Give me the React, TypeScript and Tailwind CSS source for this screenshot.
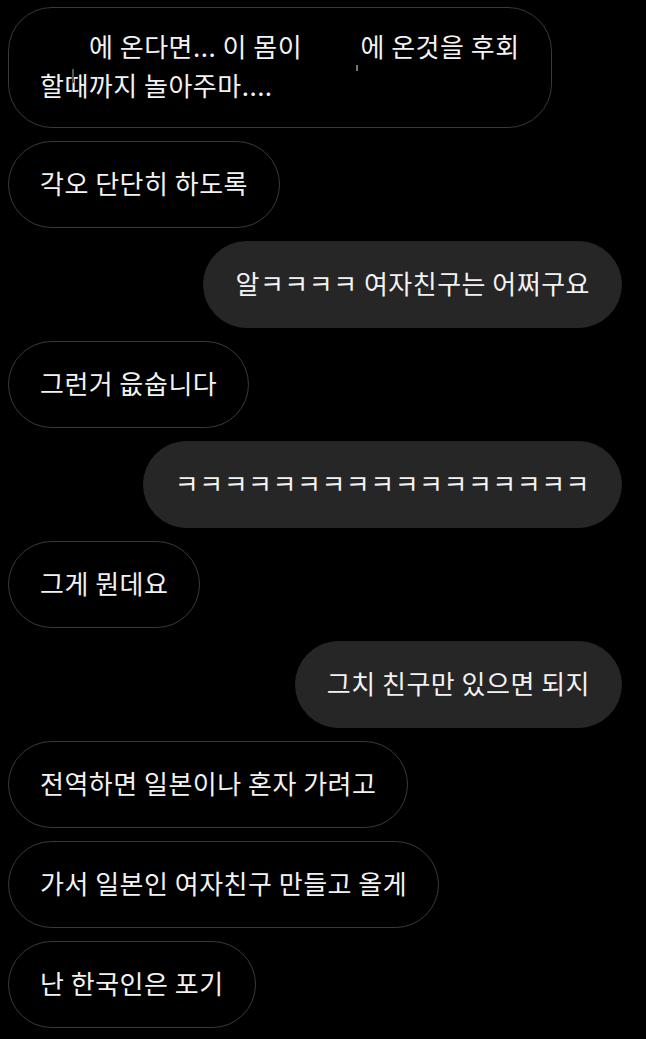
const ks = 'ㅋ'.repeat(17);

type Msg = { side: 'l' | 'r'; text: React.ReactNode };

const msgs: Msg[] = [
  { side: 'l', text: '각오 단단히 하도록' },
  { side: 'r', text: '알ㅋㅋㅋㅋ 여자친구는 어쩌구요' },
  { side: 'l', text: '그런거 읎숩니다' },
  { side: 'r', text: ks },
  { side: 'l', text: '그게 뭔데요' },
  { side: 'r', text: '그치 친구만 있으면 되지' },
  { side: 'l', text: '전역하면 일본이나 혼자 가려고' },
  { side: 'l', text: '가서 일본인 여자친구 만들고 올게' },
  { side: 'l', text: '난 한국인은 포기' },
];

function Bubble({ side, children, className = '' }: { side: 'l' | 'r'; children: React.ReactNode; className?: string }) {
  const base =
    'shrink-0 whitespace-nowrap rounded-[44px] border-[1.5px] px-[31px] text-[26px] tracking-[0.5px] text-[#f2f2f2]';
  const look =
    side === 'l'
      ? 'self-start border-[#3a3a3a] bg-black'
      : 'self-end border-[#262626] bg-[#262626]';
  return <div className={`${base} ${look} ${className}`}>{children}</div>;
}

export default function App() {
  return (
    <div
      className="flex min-h-[1039px] w-[646px] flex-col gap-[13px] bg-black pl-[8px] pr-[24px] pt-[7px]"
      style={{ fontFamily: '"Noto Sans CJK KR", "Noto Sans", sans-serif' }}
    >
      <Bubble side="l" className="h-[121px] pt-[18px] leading-[39px]">
        <span className="relative inline-block w-[49px]">
          <span className="absolute left-[32px] top-[12px] h-[14px] w-[2px] bg-[#555]" />
        </span>
        에 온다면... 이 몸이{' '}
        <span className="relative inline-block w-[52px]">
          <span className="absolute left-[48px] top-[8px] h-[6px] w-[2px] bg-[#777]" />
        </span>
        에 온것을 후회
        <br />
        할때까지 놀아주마....
      </Bubble>
      {msgs.map((m, i) => (
        <Bubble key={i} side={m.side} className="flex h-[87px] items-center pb-[4px] leading-[40px]">
          {m.text}
        </Bubble>
      ))}
    </div>
  );
}
